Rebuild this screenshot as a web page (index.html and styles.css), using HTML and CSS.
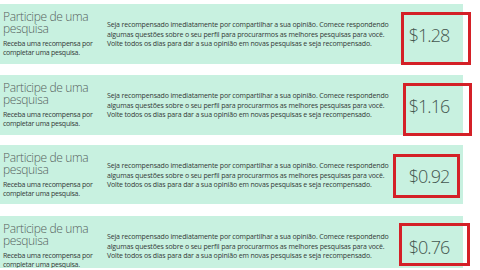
FILE: index.html
```html
<!DOCTYPE html>
<html lang="pt">
<head>
<meta charset="utf-8">
<title>Pesquisas</title>
<link rel="stylesheet" href="styles.css">
</head>
<body>
<main class="list">
  <section class="card c1">
    <div class="body">
      <div class="lead">
        <h2 class="title">Participe de uma pesquisa</h2>
        <p class="sub">Receba uma recompensa por completar uma pesquisa.</p>
      </div>
      <p class="desc">Seja recompensado imediatamente por compartilhar a sua opinião. Comece respondendo<br>algumas questões sobre o seu perfil para procurarmos as melhores pesquisas para você.<br>Volte todos os dias para dar a sua opinião em novas pesquisas e seja recompensado.</p>
      <div class="price">$1.28</div>
    </div>
    <span class="mark"></span>
  </section>
  <section class="card c2">
    <div class="body">
      <div class="lead">
        <h2 class="title">Participe de uma pesquisa</h2>
        <p class="sub">Receba uma recompensa por completar uma pesquisa.</p>
      </div>
      <p class="desc">Seja recompensado imediatamente por compartilhar a sua opinião. Comece respondendo<br>algumas questões sobre o seu perfil para procurarmos as melhores pesquisas para você.<br>Volte todos os dias para dar a sua opinião em novas pesquisas e seja recompensado.</p>
      <div class="price">$1.16</div>
    </div>
    <span class="mark"></span>
  </section>
  <section class="card c3">
    <div class="body">
      <div class="lead">
        <h2 class="title">Participe de uma pesquisa</h2>
        <p class="sub">Receba uma recompensa por completar uma pesquisa.</p>
      </div>
      <p class="desc">Seja recompensado imediatamente por compartilhar a sua opinião. Comece respondendo<br>algumas questões sobre o seu perfil para procurarmos as melhores pesquisas para você.<br>Volte todos os dias para dar a sua opinião em novas pesquisas e seja recompensado.</p>
      <div class="price">$0.92</div>
    </div>
    <span class="mark"></span>
  </section>
  <section class="card c4">
    <div class="body">
      <div class="lead">
        <h2 class="title">Participe de uma pesquisa</h2>
        <p class="sub">Receba uma recompensa por completar uma pesquisa.</p>
      </div>
      <p class="desc">Seja recompensado imediatamente por compartilhar a sua opinião. Comece respondendo<br>algumas questões sobre o seu perfil para procurarmos as melhores pesquisas para você.<br>Volte todos os dias para dar a sua opinião em novas pesquisas e seja recompensado.</p>
      <div class="price">$0.76</div>
    </div>
    <span class="mark"></span>
  </section>
</main>
</body>
</html>
```
FILE: styles.css
```css
* { box-sizing: border-box; }
html, body {
  margin: 0;
  padding: 0;
  background: #ffffff;
  width: 480px;
  height: 270px;
  overflow: hidden;
  font-family: "Open Sans", "Noto Sans", sans-serif;
}
.list {
  display: flex;
  flex-direction: column;
}
.card {
  position: relative;
  width: 463px;
  background: #c8f1e0;
}
.c1 { margin-top: 4px; height: 60px; }
.c2 { margin-top: 11px; height: 60px; }
.c3 { margin-top: 10px; height: 59px; }
.c4 { margin-top: 12px; height: 52px; }

.body {
  display: flex;
  height: 100%;
  overflow: hidden;
  padding-left: 3px;
}
.lead {
  width: 104px;
  flex: none;
  padding-top: 7px;
}
.title {
  margin: 0;
  font-size: 12px;
  font-weight: 300;
  line-height: 11.5px;
  letter-spacing: -0.35px;
  color: #56625d;
  width: 100px;
}
.sub {
  margin: 6px 0 0;
  font-size: 7px;
  line-height: 8.5px;
  letter-spacing: -0.25px;
  color: #333a37;
}
.desc {
  margin: 0;
  width: 288px;
  flex: none;
  padding-top: 16px;
  font-size: 7px;
  line-height: 9.5px;
  letter-spacing: -0.15px;
  color: #333a37;
  white-space: nowrap;
}
.price {
  width: 68px;
  flex: none;
  padding-top: 21px;
  text-align: center;
  font-size: 18px;
  line-height: 20px;
  font-weight: 300;
  letter-spacing: -1px;
  color: #44574f;
}
.mark {
  position: absolute;
  border: 3px solid #d42027;
}
.c1 .mark { left: 401px; top: 8px; width: 70px; height: 53px; }
.c2 .mark { left: 403px; top: 8px; width: 69px; height: 53px; }
.c3 .mark { left: 393px; top: 9px; width: 67px; height: 44px; }
.c4 .mark { left: 399px; top: 7px; width: 71px; height: 43px; }
```
